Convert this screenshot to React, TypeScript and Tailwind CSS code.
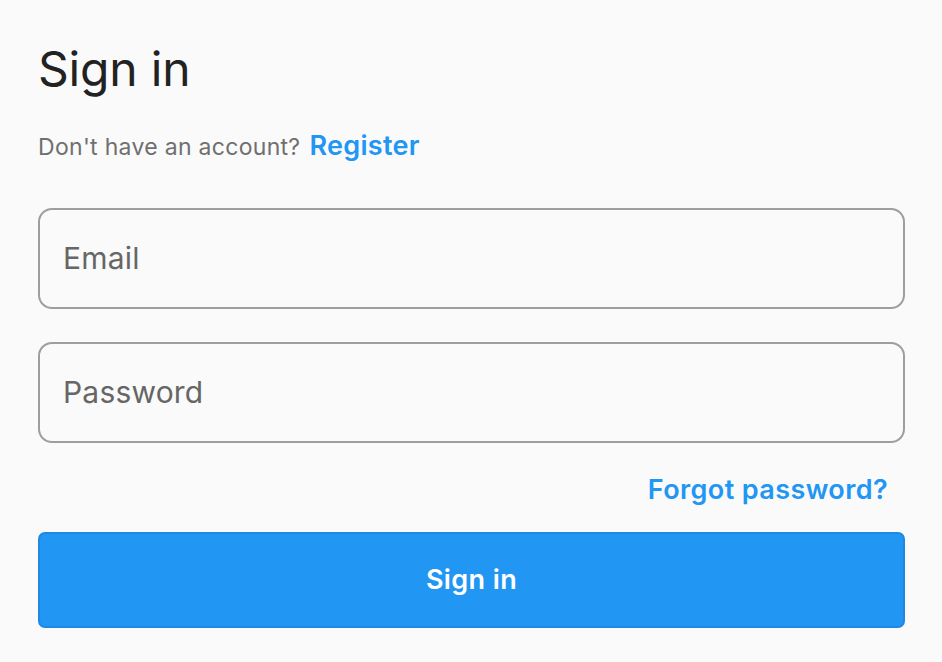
import React from 'react';

const App: React.FC = () => {
  return (
    <div
      className="min-h-[662px] w-full bg-[#fafafa] pl-[38px] pr-[37px] pt-[40px]"
      style={{ fontFamily: 'Inter, "Noto Sans", sans-serif' }}
    >
      <h1 className="text-[48px] leading-[58px] font-normal text-[#222222] tracking-[-0.2px]">Sign in</h1>

      <p className="mt-[31px] flex items-baseline gap-[9px] leading-[34px]">
        <span className="text-[23px] tracking-[0.3px] text-[#6f6f6f]">Don't have an account?</span>
        <a className="text-[27px] tracking-[0.3px] font-semibold text-[#2196f3]">Register</a>
      </p>

      <div className="mt-[44px] flex flex-col gap-[33px]">
        <div className="h-[101px] rounded-[14px] border-2 border-[#9e9e9e] flex items-center px-[23px]">
          <span className="text-[30px] tracking-[0.2px] text-[#666666]">Email</span>
        </div>
        <div className="h-[101px] rounded-[14px] border-2 border-[#9e9e9e] flex items-center px-[23px]">
          <span className="text-[30px] tracking-[0.2px] text-[#666666]">Password</span>
        </div>
      </div>

      <div className="mt-[29px] flex justify-end pr-[17px]">
        <a className="text-[27px] tracking-[0.4px] leading-[36px] font-semibold text-[#2196f3]">Forgot password?</a>
      </div>

      <button className="mt-[24px] w-full h-[96px] rounded-[7px] bg-[#2196f3] border-2 border-[#1e88e5] text-white text-[27px] tracking-[0.4px] font-semibold">
        Sign in
      </button>
    </div>
  );
};

export default App;
